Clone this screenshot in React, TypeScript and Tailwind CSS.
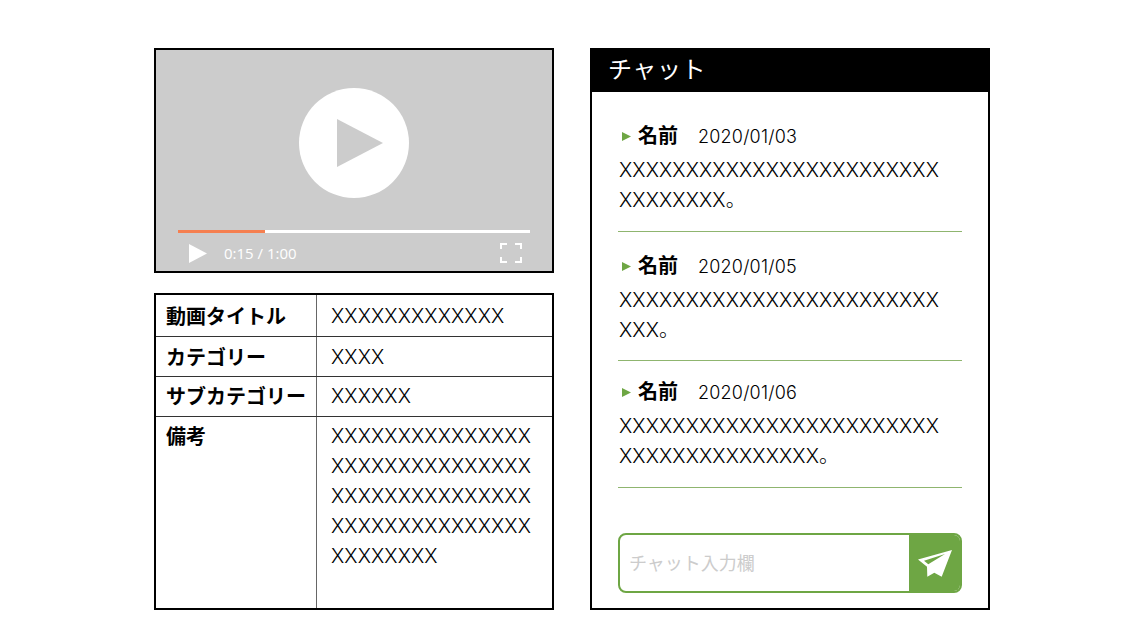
import React from "react";

const jp = "font-['Noto_Sans_CJK_JP','Noto_Sans',sans-serif]";
const xFont = "font-['Inter','Noto_Sans_CJK_JP',sans-serif] font-light tracking-[0.1px]";

const rows = [
  { label: "動画タイトル", value: ["XXXXXXXXXXXXX"], cls: "h-[41px]", pad: "pt-[6px]" },
  { label: "カテゴリー", value: ["XXXX"], cls: "h-10", pad: "pt-[5px]" },
  { label: "サブカテゴリー", value: ["XXXXXX"], cls: "h-10", pad: "pt-1" },
  {
    label: "備考",
    value: ["XXXXXXXXXXXXXXX", "XXXXXXXXXXXXXXX", "XXXXXXXXXXXXXXX", "XXXXXXXXXXXXXXX", "XXXXXXXX"],
    cls: "flex-1",
    pad: "pt-1",
  },
];

const messages = [
  { date: "2020/01/03", lines: ["XXXXXXXXXXXXXXXXXXXXXXXX", "XXXXXXXX。"], cls: "h-[140px] pt-[28px]" },
  { date: "2020/01/05", lines: ["XXXXXXXXXXXXXXXXXXXXXXXX", "XXX。"], cls: "h-[129px] pt-[18px]" },
  { date: "2020/01/06", lines: ["XXXXXXXXXXXXXXXXXXXXXXXX", "XXXXXXXXXXXXXXX。"], cls: "h-[127px] pt-[15px]" },
];

function VideoPlayer() {
  return (
    <div className="h-[225px] border-2 border-black bg-[#cccccc] flex flex-col items-center pt-[38px] px-[22px]">
      <div className="w-[110px] h-[110px] rounded-full bg-white flex items-center justify-center">
        <svg width="46" height="48" viewBox="0 0 46 48" className="ml-[11px]">
          <path d="M0 0 L46 24 L0 48 Z" fill="#cccccc" />
        </svg>
      </div>
      <div className="w-full h-[3px] mt-[32px] bg-white">
        <div className="w-[87px] h-full bg-[#f57f50]" />
      </div>
      <div className="w-full flex items-center mt-[10px] text-white">
        <svg width="18" height="19" viewBox="0 0 18 19" className="ml-[11px]">
          <path d="M0 0 L18 9.5 L0 19 Z" fill="#ffffff" />
        </svg>
        <span className="ml-[17px] text-[15px] leading-5 font-['Open_Sans',sans-serif]">0:15 / 1:00</span>
        <svg width="22" height="20" viewBox="0 0 22 20" fill="none" stroke="#ffffff" strokeWidth="2" className="ml-auto mr-[8px]">
          <path d="M1 6 V1 H7 M15 1 H21 V6 M21 14 V19 H15 M7 19 H1 V14" />
        </svg>
      </div>
    </div>
  );
}

function InfoTable() {
  return (
    <div className="mt-5 flex-1 border-2 border-black flex flex-col">
      {rows.map((row, i) => (
        <div key={row.label} className={`flex ${row.cls} ${i > 0 ? "border-t border-[#333333]" : ""}`}>
          <div className={`w-[161px] shrink-0 border-r border-[#666666] pl-[10px] ${row.pad} text-[20px] leading-[30px] font-bold ${jp}`}>
            {row.label}
          </div>
          <div className={`pl-[14px] ${row.pad} text-[20px] leading-[30px] ${xFont}`}>
            {row.value.map((line, j) => (
              <div key={j}>{line}</div>
            ))}
          </div>
        </div>
      ))}
    </div>
  );
}

function ChatMessage({ date, lines, cls }: { date: string; lines: string[]; cls: string }) {
  return (
    <div className={`${cls} border-b border-[#8fb56f]`}>
      <div className="flex items-center h-[30px] pl-1">
        <svg width="9" height="9" viewBox="0 0 9 9" className="mt-[2px]">
          <path d="M0 0 L9 4.5 L0 9 Z" fill="#6ea644" />
        </svg>
        <span className={`ml-[7px] text-[20px] font-bold ${jp}`}>名前</span>
        <span className="ml-5 mt-[2px] text-[18px] tracking-[0.2px] font-light font-['Inter',sans-serif]">{date}</span>
      </div>
      <div className={`mt-[5px] pl-px text-[20px] leading-[30px] ${xFont}`}>
        {lines.map((line, j) => (
          <div key={j}>{line}</div>
        ))}
      </div>
    </div>
  );
}

function Chat() {
  return (
    <div className="w-[400px] h-[562px] border-2 border-black flex flex-col">
      <div className={`h-[42px] shrink-0 bg-black text-white pl-4 text-[24px] leading-9 tracking-[0.6px] ${jp}`}>チャット</div>
      <div className="px-[26px] flex-1 flex flex-col">
        {messages.map((m) => (
          <ChatMessage key={m.date} {...m} />
        ))}
        <div className="mt-[45px] w-[344px] h-[60px] flex rounded-[8px] border-2 border-[#6ea644] overflow-hidden">
          <div className={`flex-1 flex items-center pl-[9px] pb-[2px] text-[18px] text-[#cccccc] ${jp}`}>チャット入力欄</div>
          <div className="w-[51px] bg-[#6ea644] flex items-center justify-center">
            <svg width="34" height="27" viewBox="0 0 34 27">
              <path
                d="M34 0 L0 9.5 L9 16.7 L9.3 26.7 L16.3 22.7 L23.7 26.7 Z M27 4 L6 10.7 L10.3 14.3 Z"
                fill="#ffffff"
                fillRule="evenodd"
              />
            </svg>
          </div>
        </div>
      </div>
    </div>
  );
}

export default function App() {
  return (
    <div className="w-[1145px] h-[644px] bg-white text-black flex pt-12 pl-[154px]">
      <div className="w-[400px] h-[562px] flex flex-col mr-9">
        <VideoPlayer />
        <InfoTable />
      </div>
      <Chat />
    </div>
  );
}
